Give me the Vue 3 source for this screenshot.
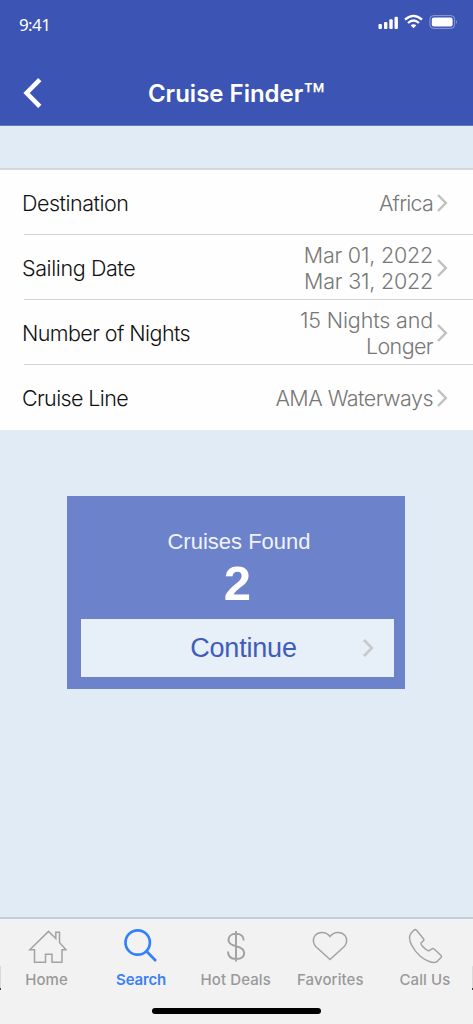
<script setup>
const rows = [
  { label: 'Destination', lines: ['Africa'], id: 'dest' },
  { label: 'Sailing Date', lines: ['Mar 01, 2022', 'Mar 31, 2022'], id: 'date' },
  { label: 'Number of Nights', lines: ['15 Nights and', 'Longer'], id: 'nights' },
  { label: 'Cruise Line', lines: ['AMA Waterways'], id: 'line' },
]
</script>

<template>
  <div class="screen">
    <header class="top">
      <div class="status">
        <span class="time">9:41</span>
        <svg class="status-icons" width="82" height="18" viewBox="0 0 82 18" fill="#fff">
          <rect x="0.5" y="11" width="3.4" height="5" rx="1" />
          <rect x="6" y="9" width="3.4" height="7" rx="1" />
          <rect x="11.3" y="6.3" width="3.4" height="9.7" rx="1" />
          <rect x="16.5" y="3.7" width="3.4" height="12.3" rx="1" />
          <g fill="none" stroke="#fff" stroke-width="2.3">
            <path d="M27 6.7Q35.5-1 44 6.7" />
            <path d="M30 10Q35.5 5 41 10" />
          </g>
          <path d="M32.6 12.3Q35.5 10 38.4 12.3L35.5 15.2Z" />
          <rect x="51.9" y="2.6" width="24.7" height="12.8" rx="3.6" fill="none" stroke="#fff" stroke-opacity=".42" />
          <rect x="53.8" y="4.4" width="20.8" height="9.2" rx="2" />
          <path d="M78.2 7Q80 9 78.2 11Z" opacity=".5" />
        </svg>
      </div>
      <div class="nav">
        <svg class="back" width="22" height="34" viewBox="0 0 22 34">
          <path d="M17.8 3.7L4.6 17 17.8 30.3" fill="none" stroke="#fff" stroke-width="4.6" stroke-linejoin="miter" />
        </svg>
        <h1>Cruise Finder<span class="tm">™</span></h1>
      </div>
    </header>

    <section class="list">
      <div v-for="r in rows" :key="r.id" class="row" :class="r.id">
        <span class="label">{{ r.label }}</span>
        <span class="value"><span v-for="(l, i) in r.lines" :key="l" :class="'l' + i">{{ l }}</span></span>
        <svg class="chev" width="12" height="20" viewBox="0 0 12 20">
          <path d="M2 2L9.8 10 2 18" fill="none" stroke="#c1c1c1" stroke-width="2.5" />
        </svg>
      </div>
    </section>

    <section class="card">
      <div class="found">Cruises Found</div>
      <div class="count">2</div>
      <div class="button">
        <span>Continue</span>
        <svg class="chev-btn" width="12" height="20" viewBox="0 0 12 20">
          <path d="M2 2L9.8 10 2 18" fill="none" stroke="#c8c9ca" stroke-width="2.6" />
        </svg>
      </div>
    </section>

    <footer class="tabs">
      <div class="tab home">
        <svg width="40" height="36" viewBox="0 0 40 36">
          <path d="M2.8 21.8L21.5 3.4 28.8 10.5V4.3H32.5V14.5L39 21.8H35V34.2H25V26.2H18.5V34.2H7.5V21.8Z" />
        </svg>
        <span>Home</span>
      </div>
      <div class="tab search active">
        <svg width="40" height="36" viewBox="0 0 40 36">
          <circle cx="16.7" cy="14.5" r="12.2" /><path d="M25.3 23L35 33" />
        </svg>
        <span>Search</span>
      </div>
      <div class="tab deals">
        <svg width="40" height="36" viewBox="0 0 40 36">
          <path d="M20 3V33.5M27.7 12.5C27.7 8.3 24.6 5.8 20 5.8S12.5 8.3 12.5 12C12.5 16 15.5 17.2 20 18.2S28.2 21 28.2 25C28.2 28.8 25 31 20 31S12 28.5 12 23.5" />
        </svg>
        <span>Hot Deals</span>
      </div>
      <div class="tab fav">
        <svg width="40" height="36" viewBox="0 0 40 36">
          <path d="M20 31.5L5.7 18.5C2.7 15.5 2.7 10.5 5 7.6C8.7 3.1 16 3.3 20 8.5C24 3.3 31.3 3.1 35 7.6C37.3 10.5 37.3 15.5 34.3 18.5Z" />
        </svg>
        <span>Favorites</span>
      </div>
      <div class="tab call">
        <svg width="40" height="36" viewBox="0 0 40 36">
          <path transform="translate(.8 .3)" d="M5 5.3L8.2 1.8Q9.5.7 10.7 2L17.7 10.5Q18.6 11.5 17.5 12.5L15.3 14.7C14.3 16 19.5 21.8 22.5 22.4Q23.8 22.5 24.6 21.5L26.6 20.4Q27.5 20 28.6 21L35.2 27.2Q36.2 28.3 35.2 29.2L31.5 33C28 35.5 21 33.5 14.5 28C7 21 2.5 12.5 4.1 7.2Z" />
        </svg>
        <span>Call Us</span>
      </div>
      <i class="edge left"></i>
      <i class="edge right"></i>
      <div class="homebar"></div>
    </footer>
  </div>
</template>

<style>
body { margin: 0; }
</style>

<style scoped>
.screen { width: 473px; height: 1024px; display: flex; flex-direction: column; background: #e1ebf5; font-family: "Liberation Sans", sans-serif; overflow: hidden; position: relative; }
.top { height: 126px; background: #3c54b4; color: #fff; box-sizing: border-box; border-bottom: 1px solid #6277c4; flex: none; }
.status { height: 50px; display: flex; justify-content: space-between; box-sizing: border-box; padding: 13px 13px 0 19px; }
.time { font: 17px/24px "Noto Sans", sans-serif; letter-spacing: -.6px; }
.status-icons { flex: none; }
.nav { height: 75px; display: grid; grid-template-columns: 24px 1fr 24px; padding: 0 22px; align-items: center; }
.back { margin-top: 11px; }
h1 { margin: 12px 0 0; font: 600 24px/30px Inter, sans-serif; text-align: center; white-space: nowrap; }
.tm { font-size: 35px; line-height: 0; font-weight: 500; position: relative; top: 7px; }
.list { margin-top: 42px; height: 262px; box-sizing: border-box; border-top: 2px solid #d5d7da; background: #fefefe; flex: none; }
.row { height: 65px; box-sizing: border-box; display: flex; align-items: center; margin-left: 24px; padding-right: 25px; border-bottom: 1px solid #d3d3d3; }
.row:last-child { border-color: transparent; }
.label { flex: 1; font: 300 21.5px/26px Inter, sans-serif; padding-top: 2px; color: #111; margin-left: -2px; white-space: nowrap; letter-spacing: -.48px; }
.date .label { letter-spacing: -.4px; }
.nights .label { letter-spacing: -.58px; }
.line .label { letter-spacing: -.63px; }
.value { display: flex; flex-direction: column; align-items: flex-end; font: 300 21.5px/26px Inter, sans-serif; letter-spacing: -.2px; padding-top: 2px; color: #777; white-space: nowrap; }
.dest .value { letter-spacing: -.8px; }
.nights .l0 { letter-spacing: -.15px; }
.nights .l1 { letter-spacing: -.6px; }
.line .value { letter-spacing: -.53px; }
.chev { margin-left: 3px; margin-top: 2px; flex: none; }
.card { width: 338px; height: 193px; margin: 66px auto 0 67px; background: #6c82cb; box-sizing: border-box; padding: 31px 11px 0 14px; color: #fff; text-align: center; flex: none; }
.found { font-size: 22px; line-height: 28px; color: #f0f3fc; margin-left: 3px; padding-top: 1px; margin-bottom: -1px; }
.count { font-size: 49px; line-height: 56px; height: 64px; font-weight: 700; }
.button { height: 58px; background: #e7eff8; color: #405cbd; display: grid; grid-template-columns: 1fr auto 1fr; align-items: center; font-size: 27px; letter-spacing: -.2px; }
.button span { grid-column: 2; position: relative; left: 6px; }
.chev-btn { justify-self: end; margin-right: 20px; }
.tabs { height: 107px; margin-top: auto; background: #f2f2f2; border-top: 2px solid #c5cdd8; box-sizing: border-box; display: flex; position: relative; flex: none; }
.tab { flex: 1; display: flex; flex-direction: column; align-items: center; padding: 9px 1.5px 0 0; font: 500 15px/20px Inter, sans-serif; color: #999; white-space: nowrap; letter-spacing: .1px; }
.tab span { margin-top: 6px; }
.tab svg { fill: none; stroke: #a3a3a3; stroke-width: 1.5; }
.tab.deals svg { stroke-width: 2; }
.active { color: #3d81f6; font-weight: 600; letter-spacing: -.15px; }
.tab.active svg { stroke: #3280fc; stroke-width: 2.7; }
.homebar { position: absolute; left: 152px; top: 89px; width: 169px; height: 6px; border-radius: 3px; background: #000; }
.edge { position: absolute; top: 47px; width: 1px; height: 22px; background: #dadada; border-bottom: 2px solid #444; }
.left { left: 0; }
.right { right: 0; }
</style>
